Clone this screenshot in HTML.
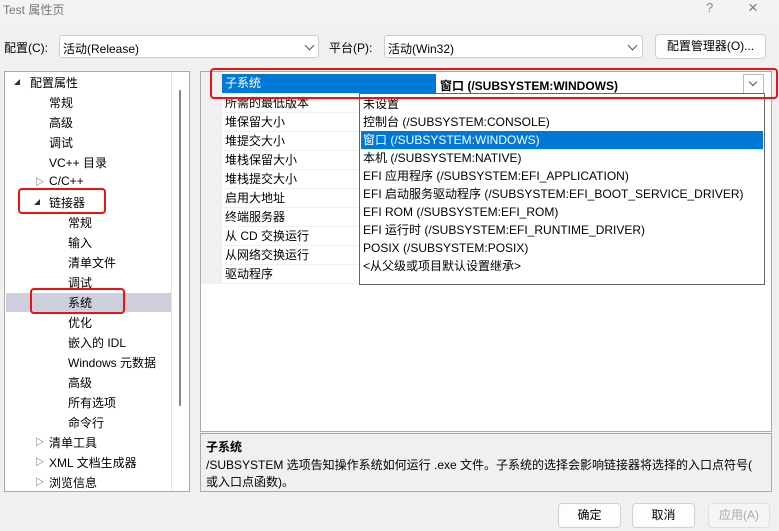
<!DOCTYPE html>
<html><head><meta charset="utf-8"><style>
*{margin:0;padding:0;box-sizing:border-box}
body{width:779px;height:531px;background:#f0f0f0;font-family:"Liberation Sans","Noto Sans CJK SC",sans-serif;font-size:12px;color:#000;position:relative;overflow:hidden}
.a{position:absolute;white-space:nowrap}
.combo{position:absolute;background:#fff;border:1px solid #ccc;border-radius:3px;height:23px}
.combo span{position:absolute;left:3px;top:4px}
.chev{position:absolute;width:7px;height:7px;border-right:1px solid #555;border-bottom:1px solid #555;transform:rotate(45deg)}
.btn{position:absolute;background:#fdfdfd;border:1px solid #d0d0d0;border-radius:4px;height:25px;text-align:center;line-height:23px}
.tri{position:absolute;width:0;height:0}
.red{position:absolute;border:2px solid #f01010;border-radius:4px}
.row{position:absolute;left:222px;width:137px;height:19px;border-bottom:1px solid #f0f0f0;padding-left:3px;line-height:18px}
.it{position:absolute;left:361px;height:18px;line-height:18px;padding-left:2px;width:402px}
</style></head><body>
<div class="a" style="left:0;top:0;width:779px;height:24px;background:#f3f3f3"></div>
<div class="a" style="left:3px;top:1px;color:#777;font-size:12px">Test 属性页</div>
<div class="a" style="left:706px;top:0;color:#888;font-size:13px">?</div>
<div class="a" style="left:748px;top:-2px;color:#777;font-size:17px">×</div>

<div class="a" style="left:4px;top:39px">配置(C):</div>
<div class="combo" style="left:59px;top:35px;width:260px"><span>活动(Release)</span><div class="chev" style="left:246px;top:6px"></div></div>
<div class="a" style="left:329px;top:39px">平台(P):</div>
<div class="combo" style="left:384px;top:35px;width:259px"><span>活动(Win32)</span><div class="chev" style="left:244px;top:6px"></div></div>
<div class="btn" style="left:655px;top:34px;width:111px">配置管理器(O)...</div>

<!-- tree -->
<div class="a" style="left:4px;top:71px;width:186px;height:421px;background:#fff;border:1px solid #aaa"></div>
<div class="a" style="left:171px;top:72px;width:1px;height:419px;background:#e4e4e4"></div>
<div class="a" style="left:179px;top:90px;width:2px;height:316px;background:#888"></div>
<div class="a" style="left:6px;top:293px;width:165px;height:19px;background:#cdcfdc"></div>
<div class="tri" style="left:14px;top:79px;border-left:6px solid transparent;border-bottom:6px solid #333"></div>
<div class="tri" style="left:34px;top:199px;border-left:6px solid transparent;border-bottom:6px solid #333"></div>
<div class="a" style="left:30px;top:74px">配置属性</div>
<div class="a" style="left:49px;top:94px">常规</div>
<div class="a" style="left:49px;top:114px">高级</div>
<div class="a" style="left:49px;top:134px">调试</div>
<div class="a" style="left:49px;top:154px">VC++ 目录</div>
<div class="a" style="left:35px;top:175px;font-size:9px;color:#444">▷</div>
<div class="a" style="left:49px;top:174px">C/C++</div>
<div class="a" style="left:49px;top:194px">链接器</div>
<div class="a" style="left:68px;top:214px">常规</div>
<div class="a" style="left:68px;top:234px">输入</div>
<div class="a" style="left:68px;top:254px">清单文件</div>
<div class="a" style="left:68px;top:274px">调试</div>
<div class="a" style="left:68px;top:294px">系统</div>
<div class="a" style="left:68px;top:314px">优化</div>
<div class="a" style="left:68px;top:334px">嵌入的 IDL</div>
<div class="a" style="left:68px;top:354px">Windows 元数据</div>
<div class="a" style="left:68px;top:374px">高级</div>
<div class="a" style="left:68px;top:394px">所有选项</div>
<div class="a" style="left:68px;top:414px">命令行</div>
<div class="a" style="left:35px;top:435px;font-size:9px;color:#444">▷</div>
<div class="a" style="left:49px;top:434px">清单工具</div>
<div class="a" style="left:35px;top:455px;font-size:9px;color:#444">▷</div>
<div class="a" style="left:49px;top:454px">XML 文档生成器</div>
<div class="a" style="left:35px;top:475px;font-size:9px;color:#444">▷</div>
<div class="a" style="left:49px;top:474px">浏览信息</div>

<!-- right panel -->
<div class="a" style="left:200px;top:71px;width:572px;height:361px;background:#fff;border:1px solid #aaa"></div>
<div class="a" style="left:201px;top:72px;width:21px;height:212px;background:#f0f0f0"></div>
<div class="a" style="left:222px;top:74px;width:214px;height:19px;background:#0078d7;color:#fff;padding-left:3px;line-height:19px">子系统</div>
<div class="a" style="left:440px;top:77px;font-weight:bold">窗口 (/SUBSYSTEM:WINDOWS)</div>
<div class="a" style="left:743px;top:74px;width:21px;height:20px;border:1px solid #bbb;background:#fff"><div class="chev" style="left:6px;top:4px;width:6px;height:6px"></div></div>
<div class="row" style="top:94px">所需的最低版本</div>
<div class="row" style="top:113px">堆保留大小</div>
<div class="row" style="top:132px">堆提交大小</div>
<div class="row" style="top:151px">堆栈保留大小</div>
<div class="row" style="top:170px">堆栈提交大小</div>
<div class="row" style="top:189px">启用大地址</div>
<div class="row" style="top:208px">终端服务器</div>
<div class="row" style="top:227px">从 CD 交换运行</div>
<div class="row" style="top:246px">从网络交换运行</div>
<div class="row" style="top:265px">驱动程序</div>
<div class="a" style="left:359px;top:93px;width:406px;height:192px;background:#fff;border:1px solid #666"></div>
<div class="it" style="top:95px">未设置</div>
<div class="it" style="top:113px">控制台 (/SUBSYSTEM:CONSOLE)</div>
<div class="it" style="top:131px;background:#0078d7;color:#fff">窗口 (/SUBSYSTEM:WINDOWS)</div>
<div class="it" style="top:149px">本机 (/SUBSYSTEM:NATIVE)</div>
<div class="it" style="top:167px">EFI 应用程序 (/SUBSYSTEM:EFI_APPLICATION)</div>
<div class="it" style="top:185px">EFI 启动服务驱动程序 (/SUBSYSTEM:EFI_BOOT_SERVICE_DRIVER)</div>
<div class="it" style="top:203px">EFI ROM (/SUBSYSTEM:EFI_ROM)</div>
<div class="it" style="top:221px">EFI 运行时 (/SUBSYSTEM:EFI_RUNTIME_DRIVER)</div>
<div class="it" style="top:239px">POSIX (/SUBSYSTEM:POSIX)</div>
<div class="it" style="top:257px">&lt;从父级或项目默认设置继承&gt;</div>

<!-- description -->
<div class="a" style="left:200px;top:433px;width:572px;height:59px;background:#f0f0f0;border:1px solid #aaa"></div>
<div class="a" style="left:206px;top:438px;font-weight:bold">子系统</div>
<div class="a" style="left:206px;top:456px">/SUBSYSTEM 选项告知操作系统如何运行 .exe 文件。子系统的选择会影响链接器将选择的入口点符号(</div>
<div class="a" style="left:206px;top:473px">或入口点函数)。</div>

<div class="btn" style="left:558px;top:503px;width:63px">确定</div>
<div class="btn" style="left:632px;top:503px;width:63px">取消</div>
<div class="btn" style="left:708px;top:503px;width:62px;color:#aaa;background:#f5f5f5;border-color:#e0e0e0">应用(A)</div>

<div class="red" style="left:210px;top:68px;width:568px;height:31px"></div>
<div class="red" style="left:18px;top:188px;width:88px;height:26px"></div>
<div class="red" style="left:30px;top:288px;width:95px;height:26px"></div>
</body></html>
